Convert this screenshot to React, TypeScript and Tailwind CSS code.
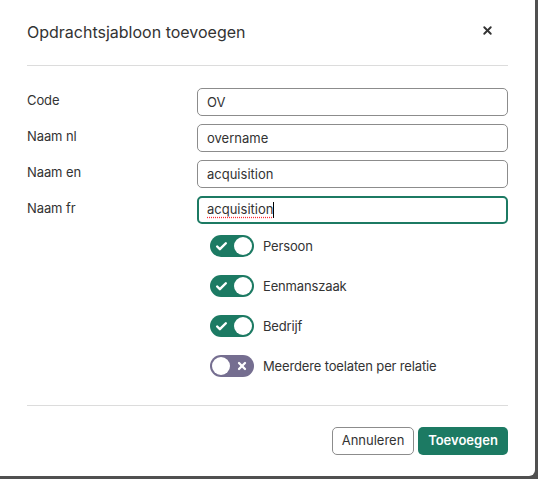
import { Check, X } from "lucide-react";

const fields = [
  { label: "Code", value: "OV" },
  { label: "Naam nl", value: "overname" },
  { label: "Naam en", value: "acquisition" },
];

const toggles = [
  { label: "Persoon", on: true },
  { label: "Eenmanszaak", on: true },
  { label: "Bedrijf", on: true },
  { label: "Meerdere toelaten per relatie", on: false },
];

function Toggle({ on }: { on: boolean }) {
  if (on) {
    return (
      <div className="flex items-center justify-between w-[44px] h-[22px] rounded-full bg-[#1c7a63] pl-[5px] pr-[2px]">
        <Check size={13} strokeWidth={4.5} className="text-white" />
        <div className="w-[18px] h-[18px] rounded-full bg-white" />
      </div>
    );
  }
  return (
    <div className="flex items-center justify-between w-[44px] h-[22px] rounded-full bg-[#756e90] pl-[2px] pr-[6px]">
      <div className="w-[18px] h-[18px] rounded-full bg-white" />
      <X size={12} strokeWidth={4.5} className="text-white" />
    </div>
  );
}

export default function App() {
  return (
    <div className="w-[538px] h-[479px] bg-[#505050] font-['Inter',sans-serif] text-[#333]">
      <div className="w-[535px] h-[476px] bg-white rounded-br-[6px] flex flex-col">
        <div className="flex items-center justify-between pl-[27px] pr-[41px] pt-[22px] h-[65px] pb-[23px]">
          <h2 className="text-[16px] leading-[20px]">Opdrachtsjabloon toevoegen</h2>
          <X size={13} strokeWidth={3.5} className="text-[#333] -mt-[4px]" />
        </div>
        <div className="mx-[27px] border-t border-[#dcdcdc]" />

        <div className="flex flex-col gap-[8px] pl-[27px] pr-[27px] mt-[22px]">
          {fields.map((f) => (
            <div key={f.label} className="flex">
              <label className="w-[170px] text-[13px] tracking-[-0.1px] leading-[20px] pt-[2px]">{f.label}</label>
              <input
                readOnly
                value={f.value}
                className="w-[311px] h-[28px] border border-[#8c8c8c] rounded-[5px] px-[9px] text-[13px] text-[#333] outline-none"
              />
            </div>
          ))}
          <div className="flex">
            <label className="w-[170px] text-[13px] tracking-[-0.1px] leading-[20px] pt-[2px]">Naam fr</label>
            <div className="w-[311px] h-[28px] border-2 border-[#1c7a63] rounded-[5px] pl-[8px] flex items-center text-[13px]">
              <span className="underline decoration-dotted decoration-red-500 underline-offset-[3px]">acquisition</span>
              <span className="w-px h-[16px] bg-black" />
            </div>
          </div>
        </div>

        <div className="flex flex-col gap-[18px] pl-[210px] mt-[11px]">
          {toggles.map((t) => (
            <div key={t.label} className="flex items-center gap-[9px]">
              <Toggle on={t.on} />
              <span className="text-[13px] tracking-[-0.15px] leading-[20px]">{t.label}</span>
            </div>
          ))}
        </div>

        <div className="mx-[27px] mt-[28px] border-t border-[#dcdcdc]" />

        <div className="flex justify-end gap-[4px] pr-[27px] mt-[21px]">
          <button className="h-[28px] w-[82px] border border-[#8c8c8c] rounded-[5px] text-[13px] text-[#333] bg-white">
            Annuleren
          </button>
          <button className="h-[28px] w-[90px] rounded-[5px] text-[13px] font-semibold text-white bg-[#1c7a63]">
            Toevoegen
          </button>
        </div>
      </div>
    </div>
  );
}
